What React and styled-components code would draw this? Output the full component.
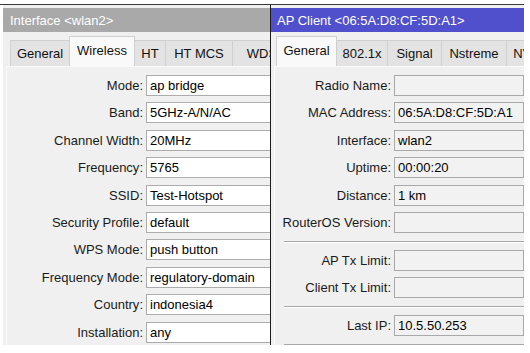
import React from "react";
import styled, { createGlobalStyle } from "styled-components";

const GlobalStyle = createGlobalStyle`
  html, body {
    margin: 0;
    padding: 0;
    background: #ffffff;
  }
  body {
    font-family: "Liberation Sans", Arial, sans-serif;
    font-size: 13px;
    color: #111;
  }
`;

const leftTabs = [
  { name: "General", w: 60 },
  { name: "Wireless", w: 66, active: true },
  { name: "HT", w: 32 },
  { name: "HT MCS", w: 68 },
  { name: "WDS", w: 60 },
];

const rightTabs = [
  { name: "General", w: 61, active: true },
  { name: "802.1x", w: 52 },
  { name: "Signal", w: 55 },
  { name: "Nstreme", w: 66 },
  { name: "NV2", w: 40 },
];

const wirelessRows = [
  ["Mode", "ap bridge"],
  ["Band", "5GHz-A/N/AC"],
  ["Channel Width", "20MHz"],
  ["Frequency", "5765"],
  ["SSID", "Test-Hotspot"],
  ["Security Profile", "default"],
  ["WPS Mode", "push button"],
  ["Frequency Mode", "regulatory-domain"],
  ["Country", "indonesia4"],
  ["Installation", "any"],
];

const clientSections = [
  [
    ["Radio Name", ""],
    ["MAC Address", "06:5A:D8:CF:5D:A1"],
    ["Interface", "wlan2"],
    ["Uptime", "00:00:20"],
    ["Distance", "1 km"],
    ["RouterOS Version", ""],
  ],
  [
    ["AP Tx Limit", ""],
    ["Client Tx Limit", ""],
  ],
  [["Last IP", "10.5.50.253"]],
];

export default function App() {
  return (
    <>
      <GlobalStyle />
      <Screen>
        <Window $left={3} $width={300}>
          <TitleBar $active={false} $indent={7}>
            Interface &lt;wlan2&gt;
          </TitleBar>
          <TabStrip $indent={8}>
            {leftTabs.map((t) => (
              <Tab key={t.name} $w={t.w} $active={t.active}>
                {t.name}
              </Tab>
            ))}
          </TabStrip>
          <Panel $inset={3}>
            <Form $label={136} $top={8}>
              {wirelessRows.map(([label, value]) => (
                <React.Fragment key={label}>
                  <Label>{label}:</Label>
                  <Field $readOnly={false}>{value}</Field>
                </React.Fragment>
              ))}
            </Form>
          </Panel>
        </Window>

        <Window $left={270} $width={254} $front>
          <TitleBar $active $indent={6}>
            AP Client &lt;06:5A:D8:CF:5D:A1&gt;
          </TitleBar>
          <TabStrip $indent={6}>
            {rightTabs.map((t) => (
              <Tab key={t.name} $w={t.w} $active={t.active}>
                {t.name}
              </Tab>
            ))}
          </TabStrip>
          <Panel $inset={3}>
            {clientSections.map((rows, i) => (
              <React.Fragment key={i}>
                <Form $label={116} $top={i === 0 ? 8 : 7}>
                  {rows.map(([label, value]) => (
                    <React.Fragment key={label}>
                      <Label>{label}:</Label>
                      <Field $readOnly>{value}</Field>
                    </React.Fragment>
                  ))}
                </Form>
                <Separator />
              </React.Fragment>
            ))}
          </Panel>
        </Window>
      </Screen>
    </>
  );
}

const Screen = styled.div`
  position: relative;
  margin-top: 4px;
  width: 524px;
  height: 340px;
  border-top: 1px solid #3a3a3a;
  overflow: hidden;
`;

const Window = styled.div`
  position: absolute;
  top: 0;
  bottom: 0;
  left: ${(p) => p.$left}px;
  width: ${(p) => p.$width}px;
  background: #f0f0f0;
  padding-top: 3px;
  display: flex;
  flex-direction: column;
  box-sizing: border-box;
  z-index: ${(p) => (p.$front ? 2 : 1)};
  border-left: ${(p) => (p.$front ? "1px solid #1c1c1c" : "none")};
`;

const TitleBar = styled.div`
  height: 24px;
  flex: none;
  display: flex;
  align-items: center;
  padding-left: ${(p) => p.$indent}px;
  background: ${(p) => (p.$active ? "#5050cc" : "#a9a9a9")};
  color: #ffffff;
  font-size: 13px;
  white-space: nowrap;
`;

const TabStrip = styled.div`
  height: 34px;
  flex: none;
  display: flex;
  align-items: flex-end;
  padding-left: ${(p) => p.$indent}px;
  white-space: nowrap;
`;

const Tab = styled.div`
  flex: none;
  box-sizing: border-box;
  width: ${(p) => p.$w}px;
  height: ${(p) => (p.$active ? 30 : 26)}px;
  padding-bottom: ${(p) => (p.$active ? 3 : 0)}px;
  display: flex;
  align-items: center;
  justify-content: center;
  background: ${(p) => (p.$active ? "#f9f9f9" : "#e3e3e3")};
  border: 1px solid #d0d0d0;
  border-bottom: none;
  margin-left: -1px;
  color: #111;
  font-size: 13px;
`;

const Panel = styled.div`
  flex: 1;
  margin-left: ${(p) => p.$inset}px;
  border-left: 1px solid #fbfbfb;
  border-top: 1px solid #fbfbfb;
  background: #f0f0f0;
`;

const Form = styled.div`
  display: grid;
  grid-template-columns: ${(p) => p.$label}px 1fr;
  grid-auto-rows: 21px;
  column-gap: 3px;
  row-gap: 6.4px;
  padding-top: ${(p) => p.$top}px;
  padding-bottom: 8px;
  align-items: center;
`;

const Label = styled.div`
  text-align: right;
  white-space: nowrap;
  color: #1a1a1a;
  font-size: 13px;
`;

const Field = styled.div`
  height: 21px;
  box-sizing: border-box;
  border: 1px solid ${(p) => (p.$readOnly ? "#a9a9a9" : "#acacac")};
  background: ${(p) => (p.$readOnly ? "#f2f2f2" : "#ffffff")};
  padding-left: 3px;
  display: flex;
  align-items: center;
  white-space: nowrap;
  color: #000;
  font-size: 13px;
`;

const Separator = styled.div`
  margin-left: 9px;
  border-top: 1px solid #a8a8a8;
  border-bottom: 1px solid #ffffff;
`;
